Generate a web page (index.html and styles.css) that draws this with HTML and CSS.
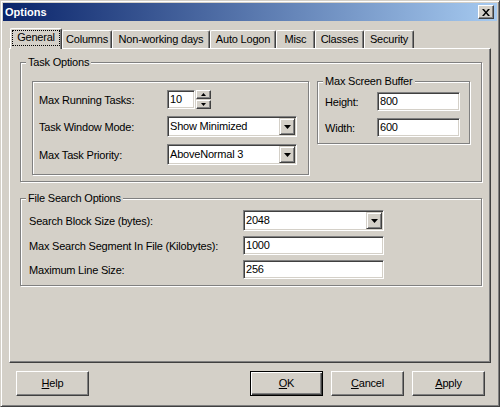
FILE: index.html
```html
<!DOCTYPE html>
<html lang="en">
<head>
  <meta charset="UTF-8">
  <title>Options</title>
  <link rel="stylesheet" href="styles.css">
</head>
<body>
  <div class="window">
    <div class="titlebar">
      <span class="title">Options</span>
      <span class="close-btn">
        <svg width="8" height="7" viewBox="0 0 8 7"><path d="M0 0h2l2 2.4 2-2.4h2l-3 3.5 3 3.5h-2l-2-2.4-2 2.4h-2l3-3.5z" fill="#000"/></svg>
      </span>
    </div>

    <div class="dialog">
      <div class="tabs">
        <div class="tab selected tab-general"><span class="focus">General</span></div>
        <div class="tab tab-columns">Columns</div>
        <div class="tab tab-days">Non-working days</div>
        <div class="tab tab-logon">Auto Logon</div>
        <div class="tab tab-misc">Misc</div>
        <div class="tab tab-classes">Classes</div>
        <div class="tab tab-security">Security</div>
      </div>

      <div class="panel">
        <fieldset class="group task-group">
          <legend>Task Options</legend>
          <div class="task-row">
            <div class="frame task-frame">
              <div class="row row-spin">
                <span class="label">Max Running Tasks:</span>
                <div class="field spin-field">10</div>
                <div class="spin">
                  <span class="spin-btn"><svg width="5" height="3"><polygon points="2.5,0 5,3 0,3" fill="#000"/></svg></span>
                  <span class="spin-btn"><svg width="5" height="3"><polygon points="0,0 5,0 2.5,3" fill="#000"/></svg></span>
                </div>
              </div>
              <div class="row">
                <span class="label">Task Window Mode:</span>
                <div class="combo task-combo">
                  <span class="combo-text">Show Minimized</span>
                  <span class="combo-btn"><svg width="7" height="4"><polygon points="0,0 7,0 3.5,4" fill="#000"/></svg></span>
                </div>
              </div>
              <div class="row">
                <span class="label">Max Task Priority:</span>
                <div class="combo task-combo">
                  <span class="combo-text">AboveNormal 3</span>
                  <span class="combo-btn"><svg width="7" height="4"><polygon points="0,0 7,0 3.5,4" fill="#000"/></svg></span>
                </div>
              </div>
            </div>

            <fieldset class="group buffer-group">
              <legend>Max Screen Buffer</legend>
              <div class="buffer-rows">
                <div class="row row-small">
                  <span class="label buffer-label">Height:</span>
                  <div class="field buffer-field">800</div>
                </div>
                <div class="row row-small">
                  <span class="label buffer-label">Width:</span>
                  <div class="field buffer-field">600</div>
                </div>
              </div>
            </fieldset>
          </div>
        </fieldset>

        <fieldset class="group search-group">
          <legend>File Search Options</legend>
          <div class="search-rows">
            <div class="row">
              <span class="label search-label">Search Block Size (bytes):</span>
              <div class="combo search-combo">
                <span class="combo-text">2048</span>
                <span class="combo-btn"><svg width="7" height="4"><polygon points="0,0 7,0 3.5,4" fill="#000"/></svg></span>
              </div>
            </div>
            <div class="row row-small">
              <span class="label search-label">Max Search Segment In File (Kilobytes):</span>
              <div class="field search-field">1000</div>
            </div>
            <div class="row row-small">
              <span class="label search-label">Maximum Line Size:</span>
              <div class="field search-field">256</div>
            </div>
          </div>
        </fieldset>
      </div>

      <div class="buttons">
        <div class="btn"><u>H</u>elp</div>
        <div class="btn btn-default btn-ok"><u>O</u>K</div>
        <div class="btn btn-side"><u>C</u>ancel</div>
        <div class="btn btn-side"><u>A</u>pply</div>
      </div>
    </div>
  </div>
</body>
</html>
```

FILE: styles.css
```css
body {
  margin: 0;
  background-color: #d4d0c8;
  font-family: "Liberation Sans", Arial, sans-serif;
  font-size: 11px;
  letter-spacing: -0.2px;
  color: #000;
}

.window {
  box-sizing: border-box;
  width: 500px;
  height: 407px;
  padding: 2px;
  border: 1px solid;
  border-color: #d4d0c8 #404040 #404040 #d4d0c8;
  box-shadow: inset 1px 1px 0 #fff, inset -1px -1px 0 #808080;
  background-color: #d4d0c8;
}

/* title bar */
.titlebar {
  height: 18px;
  display: flex;
  align-items: center;
  justify-content: space-between;
  padding: 0 3px 0 2px;
  background: linear-gradient(to right, #0a246a, #a6caf0);
}

.title {
  color: #fff;
  font-weight: bold;
  letter-spacing: 0;
}

.close-btn {
  box-sizing: border-box;
  width: 16px;
  height: 14px;
  display: flex;
  align-items: center;
  justify-content: center;
  background-color: #d4d0c8;
  border: 1px solid;
  border-color: #fff #404040 #404040 #fff;
  box-shadow: inset -1px -1px 0 #808080;
}

/* tabs */
.tabs {
  position: relative;
  z-index: 1;
  display: flex;
  align-items: flex-end;
  height: 21px;
  margin-top: 7px;
  padding-left: 7px;
}

.tab {
  box-sizing: border-box;
  height: 18px;
  margin-bottom: 1px;
  padding-top: 2px;
  line-height: 13px;
  text-align: center;
  white-space: nowrap;
  background-color: #d4d0c8;
  border-top: 1px solid #fff;
  border-left: 1px solid #fff;
  border-right: 1px solid #404040;
  border-radius: 2px 2px 0 0;
  box-shadow: inset -1px 0 0 #808080;
}

.tab.selected {
  height: 21px;
  margin-bottom: 0;
  padding-top: 1px;
}

.focus {
  display: block;
  margin: 0 1px;
  padding-bottom: 1px;
  border: 1px dotted #000;
}

.tab-general { width: 52px; }
.tab-columns { width: 50px; }
.tab-days { width: 98px; }
.tab-logon { width: 66px; }
.tab-misc { width: 39px; }
.tab-classes { width: 49px; }
.tab-security { width: 50px; }

/* tab page */
.panel {
  box-sizing: border-box;
  width: 482px;
  height: 315px;
  margin: -1px 0 0 6px;
  padding: 7px 0 0 10px;
  border: 1px solid;
  border-color: #fff #404040 #404040 #fff;
  box-shadow: inset -1px -1px 0 #808080;
}

.group {
  margin: 0;
  padding: 0;
  min-width: 0;
  border: 1px solid #808080;
  box-shadow: 1px 1px 0 #fff, inset 1px 1px 0 #fff;
}

.group legend {
  margin-left: 5px;
  padding: 0 2px;
  line-height: 13px;
  background-color: #d4d0c8;
}

.frame {
  box-sizing: border-box;
  border: 1px solid #808080;
  box-shadow: 1px 1px 0 #fff, inset 1px 1px 0 #fff;
}

.task-group {
  box-sizing: border-box;
  width: 462px;
}

.task-row {
  display: flex;
  align-items: flex-start;
  padding: 6px 0 6px 11px;
}

.task-frame {
  width: 277px;
  height: 94px;
  margin-top: 6px;
  padding: 8px 0 0 6px;
  display: flex;
  flex-direction: column;
  gap: 7px;
}

.row {
  display: flex;
  align-items: center;
  height: 21px;
}

.row-spin,
.row-small {
  height: 19px;
}

.label {
  flex: none;
  width: 128px;
  white-space: nowrap;
}

/* inputs */
.field {
  box-sizing: border-box;
  height: 19px;
  padding: 1px 0 0 2px;
  line-height: 15px;
  background-color: #fff;
  border: 1px solid;
  border-color: #808080 #fff #fff #808080;
  box-shadow: inset 1px 1px 0 #404040, inset -1px -1px 0 #d4d0c8;
}

.spin-field {
  width: 28px;
}

.spin {
  display: flex;
  flex-direction: column;
  gap: 1px;
  margin-left: 1px;
}

.spin-btn {
  box-sizing: border-box;
  width: 15px;
  height: 9px;
  display: flex;
  align-items: center;
  justify-content: center;
  background-color: #d4d0c8;
  border: 1px solid;
  border-color: #fff #404040 #404040 #fff;
  box-shadow: inset -1px -1px 0 #808080;
}

.combo {
  box-sizing: border-box;
  display: flex;
  height: 21px;
  padding: 1px;
  background-color: #fff;
  border: 1px solid;
  border-color: #808080 #fff #fff #808080;
  box-shadow: inset 1px 1px 0 #404040, inset -1px -1px 0 #d4d0c8;
}

.combo-text {
  flex: 1;
  padding-left: 1px;
  line-height: 17px;
}

.combo-btn {
  box-sizing: border-box;
  width: 16px;
  height: 17px;
  display: flex;
  align-items: center;
  justify-content: center;
  background-color: #d4d0c8;
  border: 1px solid;
  border-color: #d4d0c8 #404040 #404040 #d4d0c8;
  box-shadow: inset 1px 1px 0 #fff, inset -1px -1px 0 #808080;
}

.task-combo {
  width: 130px;
}

/* screen buffer */
.buffer-group {
  box-sizing: border-box;
  width: 153px;
  margin-left: 8px;
}

.buffer-rows {
  display: flex;
  flex-direction: column;
  gap: 7px;
  padding: 4px 0 6px 7px;
}

.buffer-label {
  width: 52px;
}

.buffer-field {
  width: 83px;
}

/* file search */
.search-group {
  box-sizing: border-box;
  width: 462px;
  margin-top: 10px;
}

.search-rows {
  display: flex;
  flex-direction: column;
  gap: 5px;
  padding: 5px 0 6px 8px;
}

.search-label {
  width: 214px;
}

.search-combo,
.search-field {
  width: 141px;
}

/* dialog buttons */
.buttons {
  display: flex;
  margin-top: 8px;
  padding: 0 12px 0 13px;
}

.btn {
  box-sizing: border-box;
  width: 73px;
  height: 25px;
  line-height: 23px;
  text-align: center;
  background-color: #d4d0c8;
  border: 1px solid;
  border-color: #fff #404040 #404040 #fff;
  box-shadow: inset -1px -1px 0 #808080;
}

.btn-default {
  border-color: #000;
  box-shadow: inset 1px 1px 0 #fff, inset -1px -1px 0 #404040, inset -2px -2px 0 #808080;
}

.btn-ok {
  margin-left: auto;
}

.btn-side {
  margin-left: 8px;
}
```
